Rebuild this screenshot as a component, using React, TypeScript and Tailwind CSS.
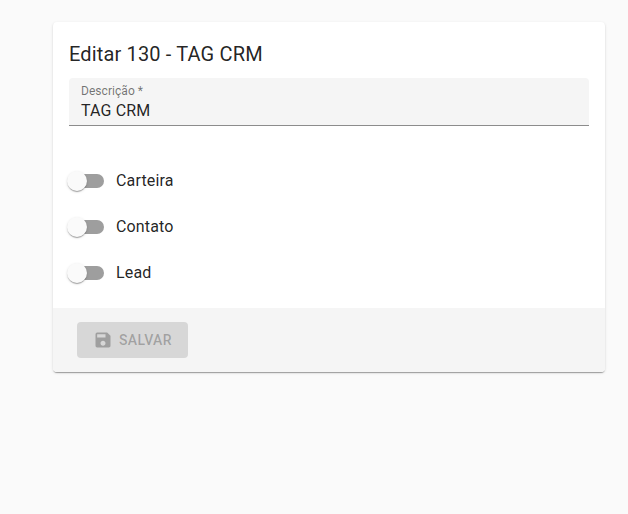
import { MdSave } from "react-icons/md";

const tags = ["Carteira", "Contato", "Lead"];

const TagSwitch = ({ label }: { label: string }) => (
  <label className="flex h-[46px] items-center">
    <span className="flex w-[47px] items-center pl-[1px]">
      <span className="h-[14px] w-[34px] rounded-[7px] bg-[#9e9e9e]">
        <span className="-ml-[3px] -mt-[3px] block h-5 w-5 rounded-full bg-[#fafafa] shadow-[0_2px_1px_-1px_rgba(0,0,0,0.2),0_1px_1px_0_rgba(0,0,0,0.14),0_1px_3px_0_rgba(0,0,0,0.12)]" />
      </span>
    </span>
    <span className="text-base leading-6 tracking-[0.15px] text-[rgba(0,0,0,0.87)]">{label}</span>
  </label>
);

export default function App() {
  return (
    <div className="min-h-[514px] bg-[#fafafa] pl-[53px] pt-[22px] font-['Roboto',sans-serif]">
      <div className="w-[552px] overflow-hidden rounded bg-white shadow-[0_2px_1px_-1px_rgba(0,0,0,0.2),0_1px_1px_0_rgba(0,0,0,0.14),0_1px_3px_0_rgba(0,0,0,0.12)]">
        <div className="px-4 pt-4">
          <h2 className="text-xl font-normal leading-8 tracking-[0.15px] text-[rgba(0,0,0,0.87)]">Editar 130 - TAG CRM</h2>
          <div className="mt-2 h-12 rounded-t border-b border-[#8c8c8c] bg-[#f5f5f5] px-3 pt-[6px]">
            <div className="text-xs leading-[14px] tracking-[0.05px] text-[rgba(0,0,0,0.54)]">Descrição *</div>
            <div className="mt-[3px] text-base leading-[19px] tracking-[0.15px] text-[rgba(0,0,0,0.87)]">TAG CRM</div>
          </div>
          <div className="pb-3 pt-8">
            {tags.map((tag) => (
              <TagSwitch key={tag} label={tag} />
            ))}
          </div>
        </div>
        <div className="bg-[#f5f5f5] px-6 py-[14px]">
          <button
            disabled
            className="flex h-9 w-[111px] items-center justify-center gap-[6px] rounded bg-[#d7d7d7] text-sm font-medium tracking-[0.4px] text-[rgba(0,0,0,0.26)]"
          >
            <MdSave className="h-5 w-5" />
            SALVAR
          </button>
        </div>
      </div>
    </div>
  );
}
